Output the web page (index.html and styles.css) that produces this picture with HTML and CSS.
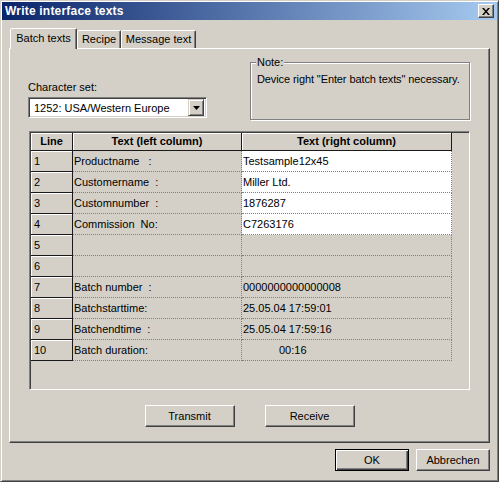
FILE: index.html
```html
<!DOCTYPE html>
<html>
<head>
<meta charset="utf-8">
<link rel="stylesheet" href="styles.css">
</head>
<body>
<div class="window">
  <div class="titlebar">
    <span class="title">Write interface texts</span>
    <span class="close"><svg width="8" height="7" viewBox="0 0 8 7"><path d="M0 0h2l2 2.5L6 0h2L5 3.5L8 7H6L4 4.5L2 7H0l3-3.5z" fill="#000"/></svg></span>
  </div>
  <div class="tabs">
    <div class="tab active">Batch texts</div>
    <div class="tab recipe">Recipe</div>
    <div class="tab message">Message text</div>
  </div>
  <div class="panel">
    <div class="top">
      <div class="charset">
        <div class="label">Character set:</div>
        <div class="combo">
          <span class="combo-text">1252: USA/Western Europe</span>
          <span class="combo-btn"><svg width="7" height="4" viewBox="0 0 7 4"><path d="M0 0h7L3.5 4z" fill="#000"/></svg></span>
        </div>
      </div>
      <fieldset class="note">
        <legend>Note:</legend>
        <div class="note-text">Device right "Enter batch texts" necessary.</div>
      </fieldset>
    </div>
    <div class="gridbox">
      <div class="grid">
        <div class="hcell">Line</div>
        <div class="hcell">Text (left column)</div>
        <div class="hcell">Text (right column)</div>

        <div class="num">1</div><div class="cell">Productname&nbsp;&nbsp;&nbsp;:</div><div class="cell white">Testsample12x45</div>
        <div class="num">2</div><div class="cell">Customername&nbsp;&nbsp;:</div><div class="cell white">Miller Ltd.</div>
        <div class="num">3</div><div class="cell">Customnumber&nbsp;&nbsp;:</div><div class="cell white">1876287</div>
        <div class="num">4</div><div class="cell">Commission&nbsp;&nbsp;No:</div><div class="cell white">C7263176</div>
        <div class="num">5</div><div class="cell"></div><div class="cell"></div>
        <div class="num">6</div><div class="cell"></div><div class="cell"></div>
        <div class="num">7</div><div class="cell">Batch number&nbsp;&nbsp;:</div><div class="cell">0000000000000008</div>
        <div class="num">8</div><div class="cell">Batchstarttime:</div><div class="cell">25.05.04 17:59:01</div>
        <div class="num">9</div><div class="cell">Batchendtime&nbsp;&nbsp;:</div><div class="cell">25.05.04 17:59:16</div>
        <div class="num">10</div><div class="cell">Batch duration:</div><div class="cell indent">00:16</div>
      </div>
    </div>
    <div class="actions">
      <button class="btn">Transmit</button>
      <button class="btn">Receive</button>
    </div>
  </div>
  <div class="footer">
    <button class="btn default">OK</button>
    <button class="btn">Abbrechen</button>
  </div>
</div>
</body>
</html>
```
FILE: styles.css
```css
* { box-sizing: border-box; }
html, body { margin: 0; padding: 0; }
body {
  width: 499px;
  height: 482px;
  background: #d4d0c8;
  font-family: "Liberation Sans", Arial, sans-serif;
  font-size: 11px;
  color: #000;
  overflow: hidden;
}
.window {
  width: 499px;
  height: 482px;
  border: 1px solid;
  border-color: #d4d0c8 #404040 #404040 #d4d0c8;
  box-shadow: inset 1px 1px #fff, inset -1px -1px #808080;
  padding: 1px;
  background: #d4d0c8;
  display: flex;
  flex-direction: column;
}
.titlebar {
  height: 18px;
  background: linear-gradient(to right, #0a246a, #a6caf0);
  display: flex;
  align-items: center;
  padding-left: 3px;
  padding-right: 3px;
}
.title {
  color: #fff;
  font-weight: bold;
  font-size: 12px;
  letter-spacing: 0.2px;
  flex: 1;
}
.close {
  width: 16px;
  height: 14px;
  background: #d4d0c8;
  border: 1px solid;
  border-color: #fff #404040 #404040 #fff;
  box-shadow: inset -1px -1px #808080;
  display: flex;
  align-items: center;
  justify-content: center;
}
.tabs {
  display: flex;
  align-items: flex-end;
  margin: 8px 0 0 8px;
  height: 21px;
  position: relative;
  z-index: 1;
  margin-bottom: -1px;
}
.tab {
  height: 18px;
  padding-top: 2px;
  text-align: center;
  border: 1px solid;
  border-bottom: none;
  border-color: #fff #404040 transparent #fff;
  box-shadow: inset -1px 0 #808080;
  border-radius: 2px 2px 0 0;
  background: #d4d0c8;
  margin-bottom: 1px;
  white-space: nowrap;
}
.tab.active {
  width: 67px;
  height: 21px;
  padding-top: 3px;
  margin-bottom: 0;
  position: relative;
  z-index: 2;
}
.tab.recipe { width: 44px; }
.tab.message { width: 75px; }
.panel {
  margin: 0 7px 0 7px;
  height: 395px;
  border: 1px solid;
  border-color: #fff #404040 #404040 #fff;
  box-shadow: inset -1px -1px #808080;
  display: flex;
  flex-direction: column;
}
.top {
  height: 82px;
  display: flex;
  align-items: flex-start;
}
.charset {
  margin-left: 18px;
  padding-top: 32px;
}
.label { height: 13px; line-height: 13px; }
.combo {
  margin-top: 3px;
  width: 179px;
  height: 21px;
  border: 1px solid;
  border-color: #808080 #fff #fff #808080;
  box-shadow: inset 1px 1px #404040, inset -1px -1px #d4d0c8;
  background: #fff;
  display: flex;
  align-items: center;
  padding: 2px;
}
.combo-text { flex: 1; padding-left: 3px; }
.combo-btn {
  width: 16px;
  height: 17px;
  background: #d4d0c8;
  border: 1px solid;
  border-color: #d4d0c8 #404040 #404040 #d4d0c8;
  box-shadow: inset 1px 1px #fff, inset -1px -1px #808080;
  display: flex;
  align-items: center;
  justify-content: center;
}
.note {
  margin: 7px 19px 0 auto;
  width: 220px;
  height: 64px;
  border: 1px solid #808080;
  box-shadow: inset 1px 1px #fff, 1px 1px #fff;
  padding: 3px 4px 0 6px;
}
.note legend {
  padding: 0 1px;
  margin-left: -1px;
  background: #d4d0c8;
  line-height: 12px;
}
.note-text { margin-top: 2px; white-space: nowrap; letter-spacing: -0.1px; }
.gridbox {
  margin-left: 19px;
  width: 441px;
  height: 259px;
  border: 1px solid;
  border-color: #808080 #fff #fff #808080;
  box-shadow: inset 1px 1px #404040, inset -1px -1px #d4d0c8;
  padding: 1px;
}
.grid {
  display: grid;
  grid-template-columns: 42px 169px 210px;
  grid-template-rows: 18px repeat(10, 21px);
}
.hcell {
  font-weight: bold;
  text-align: center;
  line-height: 17px;
  border-right: 1px solid #1a1a1a;
  border-bottom: 1px solid #1a1a1a;
  box-shadow: inset 1px 1px #fff;
}
.num {
  padding-left: 3px;
  line-height: 20px;
  border-right: 1px solid #1a1a1a;
  border-bottom: 1px solid #1a1a1a;
  box-shadow: inset 1px 1px #fff;
}
.cell {
  padding-left: 1px;
  line-height: 20px;
  border-right: 1px dotted #808080;
  border-bottom: 1px dotted #808080;
  white-space: nowrap;
}
.cell.white { background: #fff; }
.cell.indent { padding-left: 37px; }
.actions {
  margin-top: 15px;
  display: flex;
  justify-content: center;
  gap: 30px;
}
.btn {
  font-family: "Liberation Sans", Arial, sans-serif;
  font-size: 11px;
  color: #000;
  background: #d4d0c8;
  width: 90px;
  height: 22px;
  padding: 0;
  border: 1px solid;
  border-color: #fff #404040 #404040 #fff;
  box-shadow: inset -1px -1px #808080;
}
.footer {
  display: flex;
  justify-content: flex-end;
  gap: 7px;
  margin-top: 6px;
  padding-right: 7px;
}
.footer .btn { width: 74px; }
.btn.default {
  border: 1px solid #000;
  box-shadow: inset 1px 1px #fff, inset -1px -1px #404040, inset -2px -2px #808080;
}
```
